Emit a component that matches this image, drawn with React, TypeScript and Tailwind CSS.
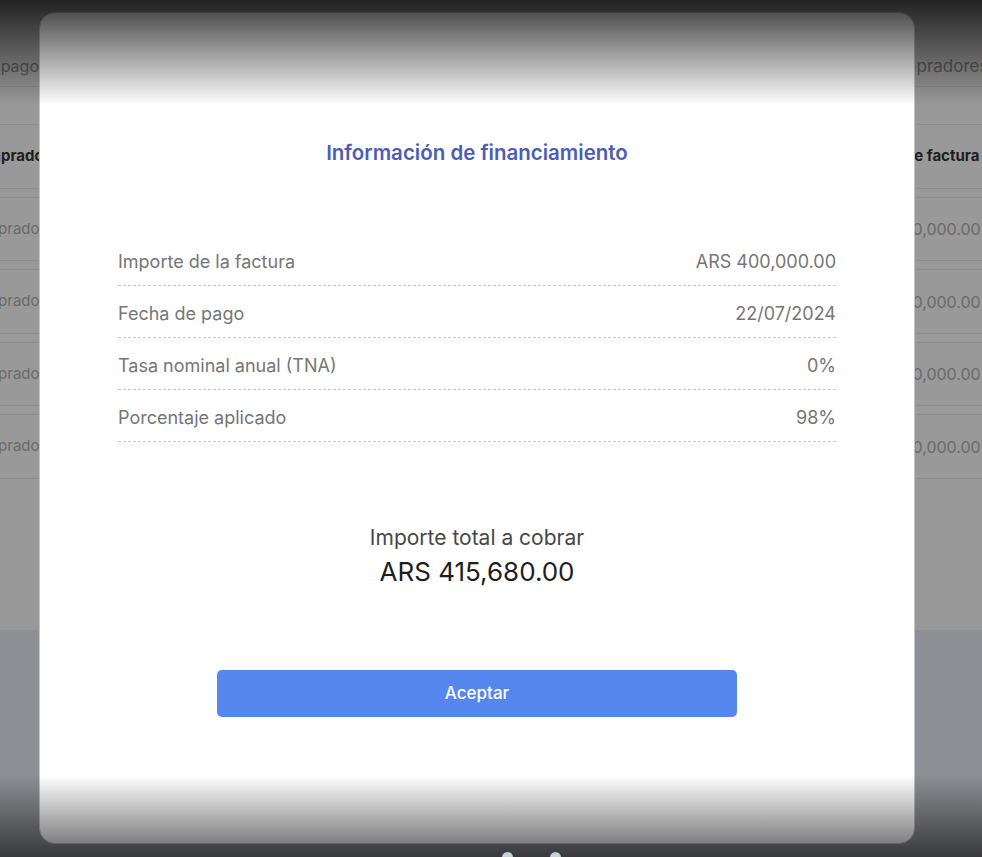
import React from "react";

const font = { fontFamily: "Inter, 'Noto Sans', sans-serif" };

function BgRow({ left, right, bold, lml, rml, h }: { left: string; right: string; bold?: boolean; lml: string; rml: string; h: string }) {
  return (
    <div className={`flex items-center ${h} border-b border-[#8c8c8c] ${bold ? "text-[15px] font-bold text-[#1e1e1e]" : "text-[15px] text-[#6a6a6a]"}`}>
      <div className="w-[39px] overflow-hidden whitespace-nowrap">
        <span className={lml}>{left}</span>
      </div>
      <div className="flex-1" />
      <div className={`w-[67px] overflow-hidden whitespace-nowrap ${bold ? "" : "text-[16px]"}`}>
        <span className={rml}>{right}</span>
      </div>
    </div>
  );
}

function Band() {
  return <div className="h-[9px] border-b border-[#8c8c8c]" />;
}

function InfoRow({ label, value }: { label: string; value: string }) {
  return (
    <div className="flex justify-between items-center pt-4 pb-[11px] border-b border-dashed border-[#c8c8c8] text-[18px] leading-6 text-[#767676]">
      <span>{label}</span>
      <span>{value}</span>
    </div>
  );
}

export default function App() {
  return (
    <div className="relative w-[982px] h-[857px] overflow-hidden bg-[#8e8f94]" style={font}>
      {/* underlying page (dimmed) */}
      <div className="bg-[#999999] h-[630px] flex flex-col">
        <div className="h-[87px] pt-[54px] border-b border-[#8c8c8c] flex text-[16px] leading-6 text-[#5e5e5e]">
          <div className="w-[39px] overflow-hidden whitespace-nowrap flex justify-end">
            <span>Fecha de pago</span>
          </div>
          <div className="flex-1" />
          <div className="w-[67px] overflow-hidden whitespace-nowrap text-[17px]">
            <span className="ml-[-36px]">Compradores</span>
          </div>
        </div>
        <div className="h-[38px] border-b border-[#8c8c8c]" />
        <BgRow h="h-[64px]" bold left="Comprador" right="Importe de factura" lml="ml-[-33px]" rml="ml-[-71px]" />
        <Band />
        <BgRow h="h-[63px]" left="Comprador" right="ARS 400,000.00" lml="ml-[-35px]" rml="ml-[-59px]" />
        <Band />
        <BgRow h="h-[64px]" left="Comprador" right="ARS 400,000.00" lml="ml-[-35px]" rml="ml-[-59px]" />
        <Band />
        <BgRow h="h-[63px]" left="Comprador" right="ARS 400,000.00" lml="ml-[-35px]" rml="ml-[-59px]" />
        <Band />
        <BgRow h="h-[64px]" left="Comprador" right="ARS 400,000.00" lml="ml-[-35px]" rml="ml-[-59px]" />
      </div>

      {/* modal */}
      <div className="absolute left-[39px] top-[12px] w-[876px] h-[832px] bg-white rounded-[16px] border border-[#c4c4c4] flex flex-col items-center pt-[126px]">
        <h2 className="text-[20.5px] leading-7 font-semibold text-[#4b5db6]">Información de financiamiento</h2>
        <div className="w-full px-[78px] mt-[67px]">
          <InfoRow label="Importe de la factura" value="ARS 400,000.00" />
          <InfoRow label="Fecha de pago" value="22/07/2024" />
          <InfoRow label="Tasa nominal anual (TNA)" value="0%" />
          <InfoRow label="Porcentaje aplicado" value="98%" />
        </div>
        <div className="mt-[82px] text-[21px] leading-7 text-[#474747]">Importe total a cobrar</div>
        <div className="mt-[4px] text-[26px] leading-8 text-[#1e1e1e]">ARS 415,680.00</div>
        <button className="mt-[82px] w-[520px] h-[47px] rounded-[5px] bg-[#5587ee] text-white text-[17px] font-medium">
          Aceptar
        </button>
      </div>

      {/* vignette overlays */}
      <div className="pointer-events-none absolute inset-x-0 top-0 h-[105px] bg-linear-to-b from-[rgba(0,0,0,0.78)] to-[rgba(0,0,0,0)]" />
      <div className="pointer-events-none absolute inset-x-0 bottom-0 h-[82px] bg-linear-to-t from-[rgba(0,0,0,0.6)] to-[rgba(0,0,0,0)]" />

      {/* dots */}
      <div className="absolute left-[502px] top-[852px] w-[11px] h-[11px] rounded-full bg-[#c9d0da]" />
      <div className="absolute left-[550px] top-[852px] w-[11px] h-[11px] rounded-full bg-[#c9d0da]" />
    </div>
  );
}
